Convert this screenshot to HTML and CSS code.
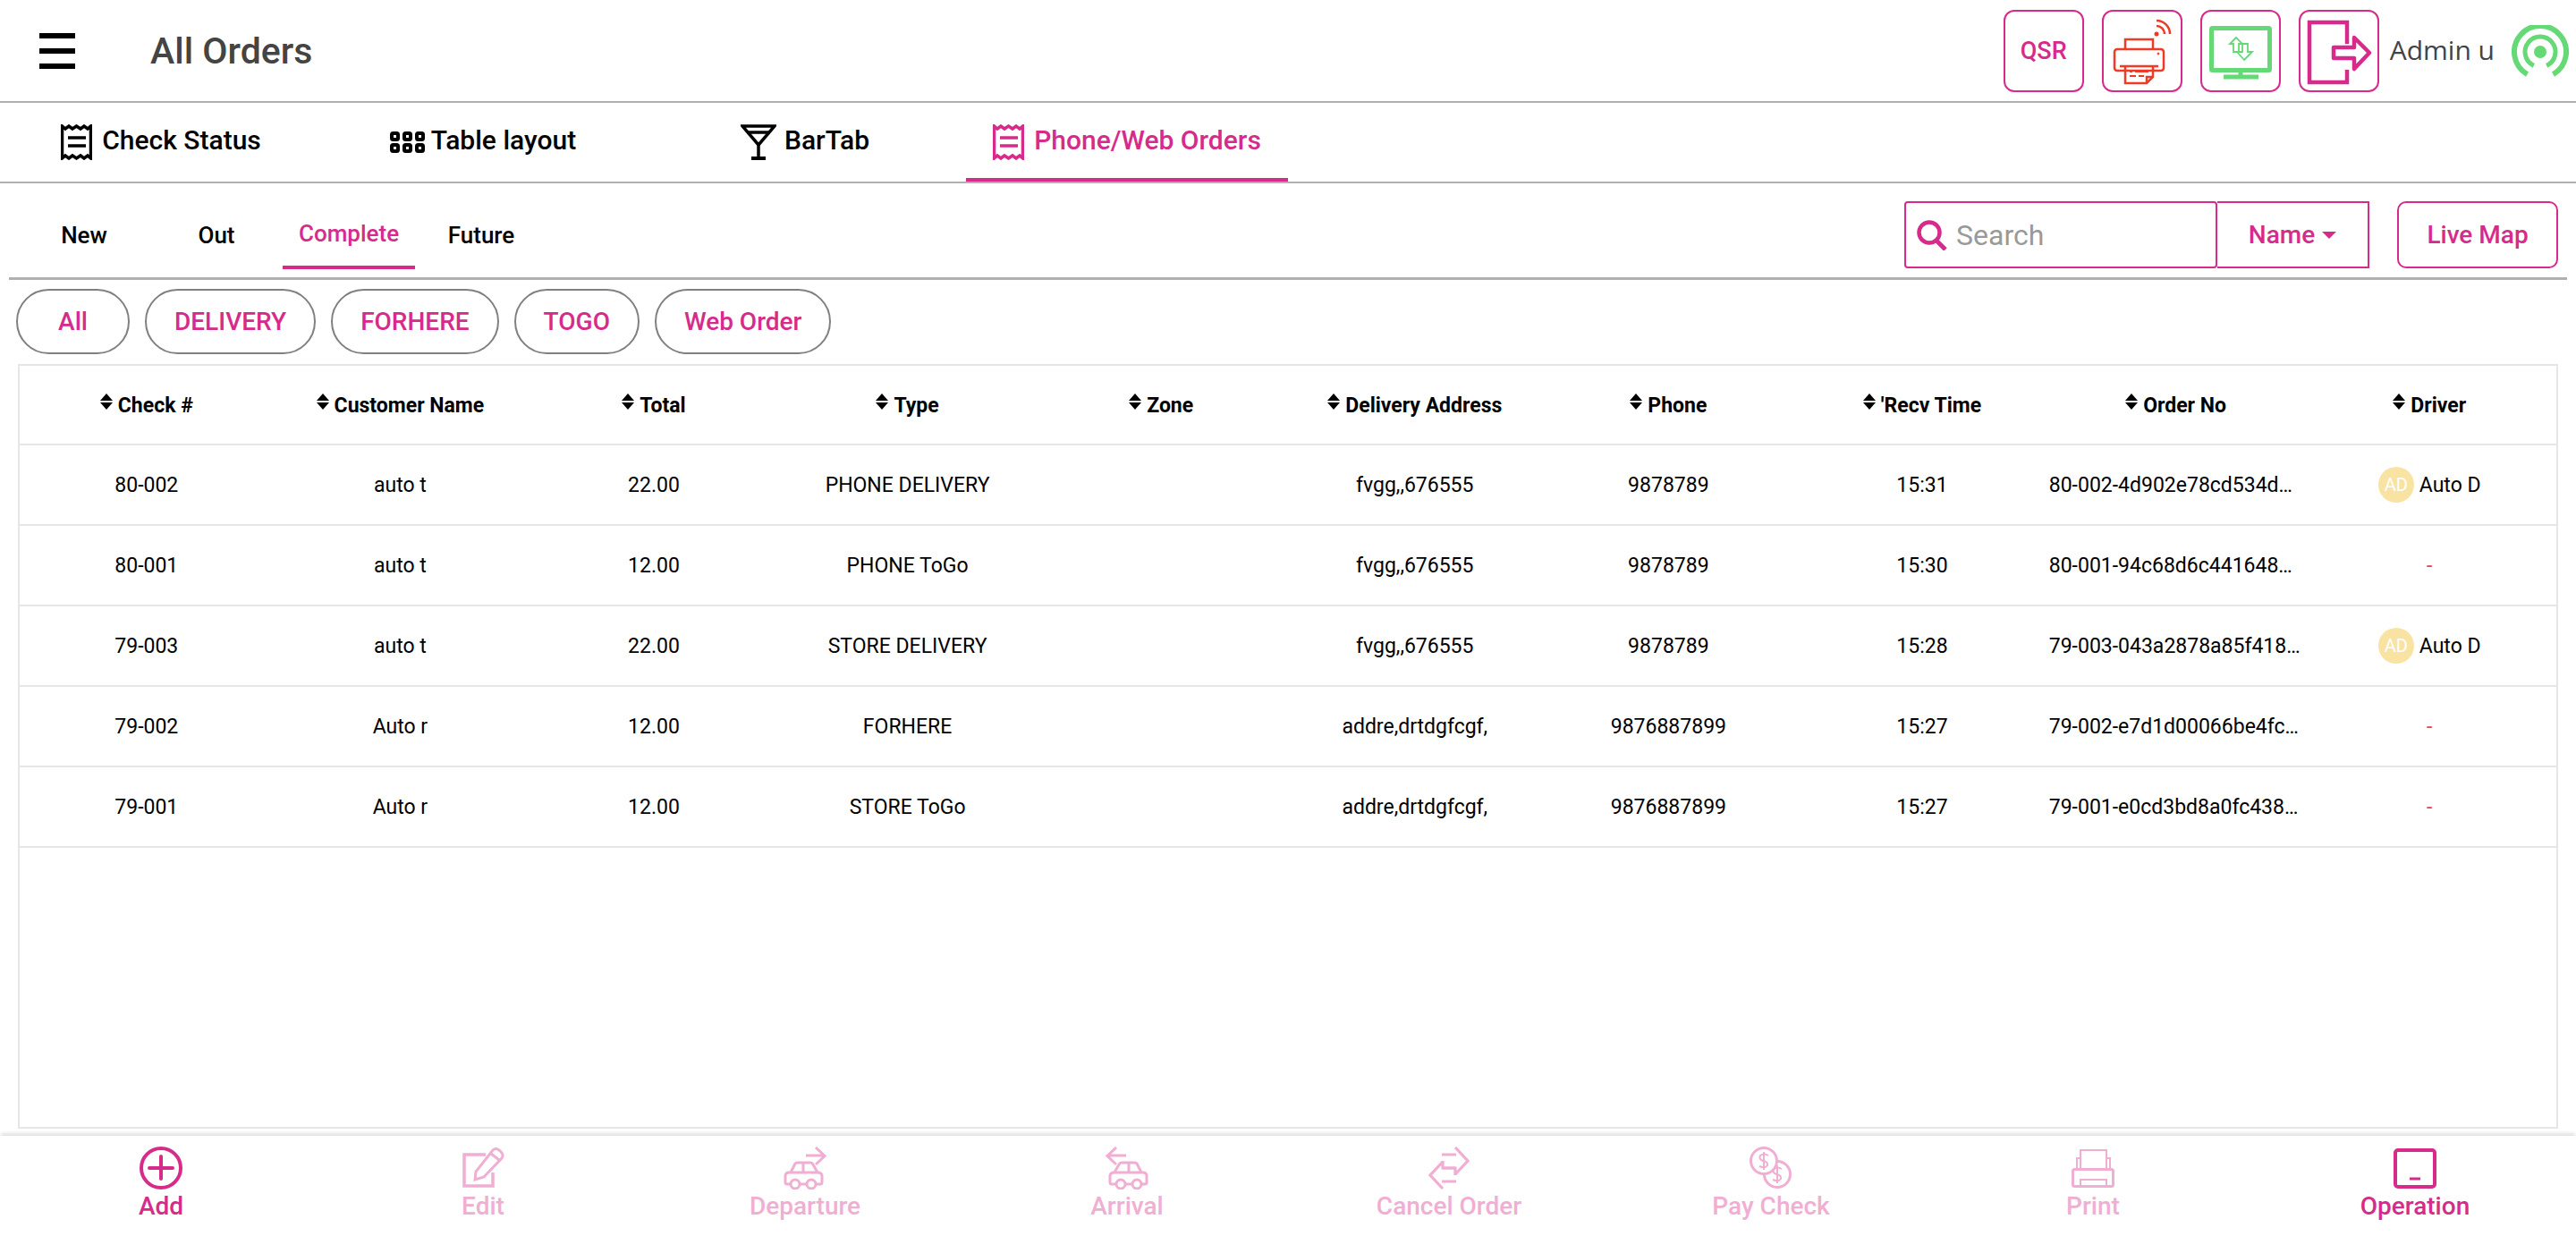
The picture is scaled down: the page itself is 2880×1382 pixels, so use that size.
FILE: index.html
```html
<!DOCTYPE html>
<html lang="en">
<head>
    <meta charset="UTF-8">
    <title>All Orders</title>
    <link rel="stylesheet" href="styles.css">
</head>
<body>
    <header class="topbar">
        <div class="menu-btn"><span></span><span></span><span></span></div>
        <h1 class="page-title">All Orders</h1>
        <div class="top-actions">
            <div class="top-btn qsr">QSR</div>
            <div class="top-btn">
                <svg viewBox="0 0 90 92" fill="none" stroke="#f03a26" stroke-width="2.5">
                    <rect x="14" y="44" width="55" height="24" rx="3"/>
                    <path d="M26 44V33H57V44"/>
                    <path d="M20 63H63"/>
                    <path d="M26 64V82H50L57 75V64M50 82V75H57"/>
                    <path d="M31 69H34M37 69H52M31 74H38M41 74H47" stroke-width="2"/>
                    <circle cx="63" cy="49" r="1" fill="#f03a26" stroke-width="1"/>
                    <circle cx="61" cy="27" r="2.5" fill="#f03a26" stroke="none"/>
                    <path d="M61 18A9 9 0 0 1 70 27M61 12A15 15 0 0 1 76 27"/>
                </svg>
            </div>
            <div class="top-btn">
                <svg viewBox="0 0 90 92" fill="none" stroke="#66d977" stroke-width="5">
                    <rect x="12.5" y="20.5" width="65" height="47" rx="1"/>
                    <path d="M45 70V75M26 75H65"/>
                    <path d="M40 31L33 38H37V47H43V38H47Z" stroke-width="1.8"/>
                    <path d="M49 56L58 47H53V38H47V47H41Z" stroke-width="1.8"/>
                </svg>
            </div>
            <div class="top-btn">
                <svg viewBox="0 0 90 92" fill="none" stroke="#d62b8b" stroke-width="4.5">
                    <path d="M54 38V14H12V81H54V67"/>
                    <path d="M39 42H62V31L79 48L62 66V54H39Z" stroke-linejoin="round"/>
                </svg>
            </div>
            <span class="user-name">Admin u</span>
            <svg class="signal" viewBox="0 0 64 58" fill="none" stroke="#66d977">
                <circle cx="32" cy="30" r="7" fill="#66d977" stroke="none"/>
                <path d="M24.8 45.4A17 17 0 1 1 39.2 45.4" stroke-width="5"/>
                <path d="M17.5 55.1A29 29 0 1 1 46.5 55.1" stroke-width="6"/>
            </svg>
        </div>
    </header>

    <nav class="main-tabs">
        <div class="main-tab">
            <svg class="icon-receipt" viewBox="0 0 35 40" fill="none" stroke="currentColor" stroke-width="3.5">
                <path d="M1.5 2L5 5L9 2L13 5L17.5 2L22 5L26 2L30 5L33.5 2V38L30 35L26 38L22 35L17.5 38L13 35L9 38L5 35L1.5 38Z"/>
                <path d="M8 15H28M8 24H28"/>
            </svg>
            <span class="tab-label">Check Status</span>
        </div>
        <div class="main-tab">
            <svg class="icon-tables" viewBox="0 0 39 24" fill="none" stroke="currentColor" stroke-width="4">
                <rect x="2" y="2" width="7" height="7" rx="1.5"/>
                <rect x="16" y="2" width="7" height="7" rx="1.5"/>
                <rect x="30" y="2" width="7" height="7" rx="1.5"/>
                <rect x="2" y="15" width="7" height="7" rx="1.5"/>
                <rect x="16" y="15" width="7" height="7" rx="1.5"/>
                <rect x="30" y="15" width="7" height="7" rx="1.5"/>
            </svg>
            <span class="tab-label">Table layout</span>
        </div>
        <div class="main-tab">
            <svg class="icon-glass" viewBox="0 0 40 40" fill="none" stroke="currentColor" stroke-width="3.5">
                <path d="M2 2H38L20 23Z"/>
                <path d="M7 9H33"/>
                <path d="M20 23V37"/>
                <path d="M12 38H28" stroke-width="4"/>
            </svg>
            <span class="tab-label">BarTab</span>
        </div>
        <div class="main-tab active">
            <svg class="icon-receipt" viewBox="0 0 35 40" fill="none" stroke="currentColor" stroke-width="3.5">
                <path d="M1.5 2L5 5L9 2L13 5L17.5 2L22 5L26 2L30 5L33.5 2V38L30 35L26 38L22 35L17.5 38L13 35L9 38L5 35L1.5 38Z"/>
                <path d="M8 15H28M8 24H28"/>
            </svg>
            <span class="tab-label">Phone/Web Orders</span>
        </div>
    </nav>

    <section class="sub-bar">
        <div class="sub-tabs">
            <div class="sub-tab">New</div>
            <div class="sub-tab">Out</div>
            <div class="sub-tab active">Complete</div>
            <div class="sub-tab">Future</div>
        </div>
        <div class="search-tools">
            <div class="search-box">
                <svg class="icon-search" viewBox="0 0 35 34" fill="none" stroke="#d62b8b" stroke-width="4.5">
                    <circle cx="15" cy="14" r="11.5"/>
                    <path d="M23 23L33 33" stroke-width="5"/>
                </svg>
                <span class="placeholder">Search</span>
            </div>
            <div class="name-select">Name<i class="caret"></i></div>
            <div class="map-btn">Live Map</div>
        </div>
    </section>

    <div class="chips">
        <div class="chip chip-all">All</div>
        <div class="chip">DELIVERY</div>
        <div class="chip">FORHERE</div>
        <div class="chip">TOGO</div>
        <div class="chip">Web Order</div>
    </div>

    <main class="table-box">
        <table class="orders">
            <thead>
                <tr>
                    <th><span class="th-in"><i class="sort"></i>Check #</span></th>
                    <th><span class="th-in"><i class="sort"></i>Customer Name</span></th>
                    <th><span class="th-in"><i class="sort"></i>Total</span></th>
                    <th><span class="th-in"><i class="sort"></i>Type</span></th>
                    <th><span class="th-in"><i class="sort"></i>Zone</span></th>
                    <th><span class="th-in"><i class="sort"></i>Delivery Address</span></th>
                    <th><span class="th-in"><i class="sort"></i>Phone</span></th>
                    <th><span class="th-in"><i class="sort"></i>'Recv Time</span></th>
                    <th><span class="th-in"><i class="sort"></i>Order No</span></th>
                    <th><span class="th-in"><i class="sort"></i>Driver</span></th>
                </tr>
            </thead>
            <tbody>
                <tr>
                    <td>80-002</td><td>auto t</td><td>22.00</td><td>PHONE DELIVERY</td><td></td>
                    <td>fvgg,,676555</td><td>9878789</td><td>15:31</td>
                    <td class="order-no">80-002-4d902e78cd534d…</td>
                    <td><span class="driver"><span class="avatar">AD</span>Auto D</span></td>
                </tr>
                <tr>
                    <td>80-001</td><td>auto t</td><td>12.00</td><td>PHONE ToGo</td><td></td>
                    <td>fvgg,,676555</td><td>9878789</td><td>15:30</td>
                    <td class="order-no">80-001-94c68d6c441648…</td>
                    <td class="no-driver">-</td>
                </tr>
                <tr>
                    <td>79-003</td><td>auto t</td><td>22.00</td><td>STORE DELIVERY</td><td></td>
                    <td>fvgg,,676555</td><td>9878789</td><td>15:28</td>
                    <td class="order-no">79-003-043a2878a85f418…</td>
                    <td><span class="driver"><span class="avatar">AD</span>Auto D</span></td>
                </tr>
                <tr>
                    <td>79-002</td><td>Auto r</td><td>12.00</td><td>FORHERE</td><td></td>
                    <td>addre,drtdgfcgf,</td><td>9876887899</td><td>15:27</td>
                    <td class="order-no">79-002-e7d1d00066be4fc…</td>
                    <td class="no-driver">-</td>
                </tr>
                <tr>
                    <td>79-001</td><td>Auto r</td><td>12.00</td><td>STORE ToGo</td><td></td>
                    <td>addre,drtdgfcgf,</td><td>9876887899</td><td>15:27</td>
                    <td class="order-no">79-001-e0cd3bd8a0fc438…</td>
                    <td class="no-driver">-</td>
                </tr>
            </tbody>
        </table>
    </main>

    <footer class="bottom-bar">
        <div class="bottom-item">
            <svg viewBox="0 0 48 48" fill="none" stroke="currentColor" stroke-width="4">
                <circle cx="24" cy="24" r="22"/>
                <path d="M24 11V36M11 24H37" stroke-linecap="round"/>
            </svg>
            Add
        </div>
        <div class="bottom-item off">
            <svg viewBox="0 0 48 48" fill="none" stroke="currentColor" stroke-width="3.5">
                <path d="M27 9H3V44H35V29"/>
                <path d="M15 37L16 28L35 4Q38 1 42 4L45 7Q47 10 45 13L25 34Z" stroke-width="3"/>
                <path d="M33 8L42 15" stroke-width="3"/>
            </svg>
            Edit
        </div>
        <div class="bottom-item off">
            <svg viewBox="0 0 48 48" fill="none" stroke="currentColor" stroke-width="3">
                <path d="M25 10H45M36 1L46 10.5L36 20"/>
                <path d="M8 29L13 19Q14 18 16 18H30Q32 18 33 20L38 29M22 18V29"/>
                <path d="M8 42H4Q2 42 2 40V33Q2 29 6 29H38Q43 29 43 33V40Q43 42 41 42H36M18 42H26"/>
                <circle cx="13" cy="42" r="5"/>
                <circle cx="31" cy="42" r="5"/>
            </svg>
            Departure
        </div>
        <div class="bottom-item off">
            <svg viewBox="0 0 48 48" fill="none" stroke="currentColor" stroke-width="3">
                <g transform="translate(48 0) scale(-1 1)">
                    <path d="M25 10H45M36 1L46 10.5L36 20"/>
                    <path d="M8 29L13 19Q14 18 16 18H30Q32 18 33 20L38 29M22 18V29"/>
                    <path d="M8 42H4Q2 42 2 40V33Q2 29 6 29H38Q43 29 43 33V40Q43 42 41 42H36M18 42H26"/>
                    <circle cx="13" cy="42" r="5"/>
                    <circle cx="31" cy="42" r="5"/>
                </g>
            </svg>
            Arrival
        </div>
        <div class="bottom-item off">
            <svg viewBox="0 0 48 48" fill="none" stroke="currentColor" stroke-width="3.2">
                <path d="M16 9H32M31 1L45 16L31 31M31 24H17V16"/>
                <path d="M32 39H16M17 47L3 32L17 17M17 24H31V32"/>
            </svg>
            Cancel Order
        </div>
        <div class="bottom-item off">
            <svg viewBox="0 0 48 48" fill="none" stroke="currentColor" stroke-width="3">
                <circle cx="16" cy="16" r="14.5"/>
                <path d="M30.5 16.5A14.5 14.5 0 1 1 16.5 30.5"/>
                <path d="M21 10Q16 7 12 10Q10 14 15 16Q21 17 20 21Q17 25 11 22M16 6V26" stroke-width="2"/>
                <path d="M36 25Q31 22 27 25Q25 29 30 31Q36 32 35 36Q32 40 26 37M31 21V41" stroke-width="2"/>
            </svg>
            Pay Check
        </div>
        <div class="bottom-item off">
            <svg viewBox="0 0 48 48" fill="none" stroke="currentColor" stroke-width="2">
                <rect x="1.5" y="25.5" width="45" height="19" rx="2" stroke-width="3"/>
                <path d="M10 25V4H39V25"/>
                <path d="M6 25V13H10M43 25V13H39"/>
                <path d="M10 44V37H39V44"/>
            </svg>
            Print
        </div>
        <div class="bottom-item">
            <svg viewBox="0 0 48 48" fill="none" stroke="currentColor" stroke-width="4">
                <rect x="2" y="4" width="44" height="41" rx="3"/>
                <path d="M18 36H30" stroke-width="3"/>
            </svg>
            Operation
        </div>
    </footer>
</body>
</html>
```

FILE: styles.css
```css
* {
    box-sizing: border-box;
}
html, body {
    height: 100%;
}
body {
    margin: 0;
    display: flex;
    flex-direction: column;
    font-family: Roboto, "Liberation Sans", sans-serif;
    background: #fff;
    color: #000;
    overflow: hidden;
}

/* top bar */
.topbar {
    flex: none;
    height: 115px;
    display: flex;
    align-items: center;
    border-bottom: 2px solid #b0b0b0;
}
.menu-btn {
    width: 40px;
    height: 40px;
    margin-left: 44px;
    display: flex;
    flex-direction: column;
    justify-content: space-between;
}
.menu-btn span {
    height: 6px;
    background: #000;
}
.page-title {
    margin: 0 0 0 84px;
    font-size: 41px;
    font-weight: 500;
    color: #444;
}
.top-actions {
    margin-left: auto;
    display: flex;
    align-items: center;
    padding-right: 8px;
}
.top-btn {
    width: 90px;
    height: 92px;
    margin-right: 20px;
    border: 2px solid #d62b8b;
    border-radius: 12px;
    display: flex;
    align-items: center;
    justify-content: center;
}
.top-btn svg {
    width: 90px;
    height: 92px;
    flex: none;
}
.qsr {
    color: #d62b8b;
    font-size: 27px;
    font-weight: 500;
}
.top-btn:nth-child(4) {
    margin-right: 12px;
}
.user-name {
    font-family: "Open Sans", sans-serif;
    font-size: 30px;
    color: #444;
    margin-right: 19px;
    margin-bottom: 2px;
}
.signal {
    width: 64px;
    height: 58px;
    margin-top: 1px;
}

/* main tabs */
.main-tabs {
    flex: none;
    height: 90px;
    display: flex;
    border-bottom: 2px solid #b0b0b0;
}
.main-tab {
    width: 360px;
    display: flex;
    align-items: center;
    justify-content: center;
    gap: 11px;
    font-size: 30px;
    font-weight: 500;
}
.tab-label {
    padding-bottom: 5px;
}
.main-tab.active {
    color: #d62b8b;
    box-shadow: inset 0 -4px 0 #d62b8b;
}
.icon-receipt {
    width: 35px;
    height: 40px;
}
.icon-tables {
    width: 39px;
    height: 24px;
    margin-right: -4px;
}
.icon-glass {
    width: 40px;
    height: 40px;
    margin-right: -2px;
}

/* sub tabs + search */
.sub-bar {
    flex: none;
    height: 108px;
    margin: 0 10px;
    padding: 20px 10px 9px;
    display: flex;
    justify-content: space-between;
    border-bottom: 3px solid #b0b0b0;
}
.sub-tabs {
    display: flex;
}
.sub-tab {
    width: 148px;
    height: 76px;
    display: flex;
    align-items: center;
    justify-content: center;
    font-size: 26px;
    font-weight: 500;
}
.sub-tab.active {
    color: #d62b8b;
    border-bottom: 4px solid #d62b8b;
}
.search-tools {
    display: flex;
    height: 75px;
}
.search-box {
    width: 350px;
    border: 2px solid #d62b8b;
    border-radius: 4px;
    display: flex;
    align-items: center;
    padding-left: 11px;
    gap: 10px;
}
.icon-search {
    width: 35px;
    height: 34px;
}
.placeholder {
    font-size: 32px;
    color: #999;
}
.name-select {
    width: 170px;
    border: 2px solid #d62b8b;
    border-left: 0;
    display: flex;
    align-items: center;
    justify-content: center;
    gap: 8px;
    color: #d62b8b;
    font-size: 28px;
    font-weight: 500;
}
.caret {
    border-left: 8px solid transparent;
    border-right: 8px solid transparent;
    border-top: 8px solid #d62b8b;
}
.map-btn {
    width: 180px;
    margin-left: 31px;
    border: 2px solid #d62b8b;
    border-radius: 10px;
    display: flex;
    align-items: center;
    justify-content: center;
    color: #d62b8b;
    font-size: 28px;
    font-weight: 500;
}

/* filter chips */
.chips {
    flex: none;
    display: flex;
    gap: 17px;
    margin: 10px 0 11px 18px;
}
.chip {
    height: 73px;
    padding: 0 31px;
    border: 2px solid #808080;
    border-radius: 37px;
    display: flex;
    align-items: center;
    justify-content: center;
    color: #d62b8b;
    font-size: 28px;
    font-weight: 500;
}
.chip-all {
    min-width: 127px;
}

/* table */
.table-box {
    flex: 1;
    min-height: 0;
    margin: 0 20px 8px;
    border: 2px solid #e6e6e6;
}
.orders {
    width: 100%;
    table-layout: fixed;
    border-collapse: collapse;
    font-size: 23px;
}
.orders th,
.orders td {
    height: 90px;
    padding: 0;
    text-align: center;
    border-bottom: 2px solid #e6e6e6;
}
.orders th {
    height: 88px;
    padding-bottom: 2px;
    font-weight: 700;
}
.th-in {
    display: inline-flex;
    align-items: center;
    gap: 6px;
}
.sort {
    display: inline-block;
    width: 14px;
    height: 18px;
    margin-top: -9px;
    position: relative;
}
.sort::before,
.sort::after {
    content: "";
    position: absolute;
    left: 0;
    border-left: 7px solid transparent;
    border-right: 7px solid transparent;
}
.sort::before {
    top: 0;
    border-bottom: 8px solid #000;
}
.sort::after {
    bottom: 0;
    border-top: 8px solid #000;
}
.orders td.order-no {
    text-align: left;
    white-space: nowrap;
}
.driver {
    display: inline-flex;
    align-items: center;
    gap: 6px;
}
.avatar {
    width: 40px;
    height: 40px;
    border-radius: 50%;
    background: #f9e3a3;
    color: #fff;
    font-size: 20px;
    display: flex;
    align-items: center;
    justify-content: center;
}
.no-driver {
    color: #f44336;
}

/* bottom bar */
.bottom-bar {
    flex: none;
    height: 112px;
    display: flex;
    box-shadow: 0 -4px 4px -1px rgba(0,0,0,0.12);
}
.bottom-item {
    width: 360px;
    padding-top: 12px;
    display: flex;
    flex-direction: column;
    align-items: center;
    color: #d62b8b;
    font-size: 28px;
    font-weight: 500;
    line-height: 32px;
    gap: 3px;
}
.bottom-item svg {
    width: 48px;
    height: 48px;
    flex: none;
}
.bottom-item.off {
    color: #f0aed3;
}
```
